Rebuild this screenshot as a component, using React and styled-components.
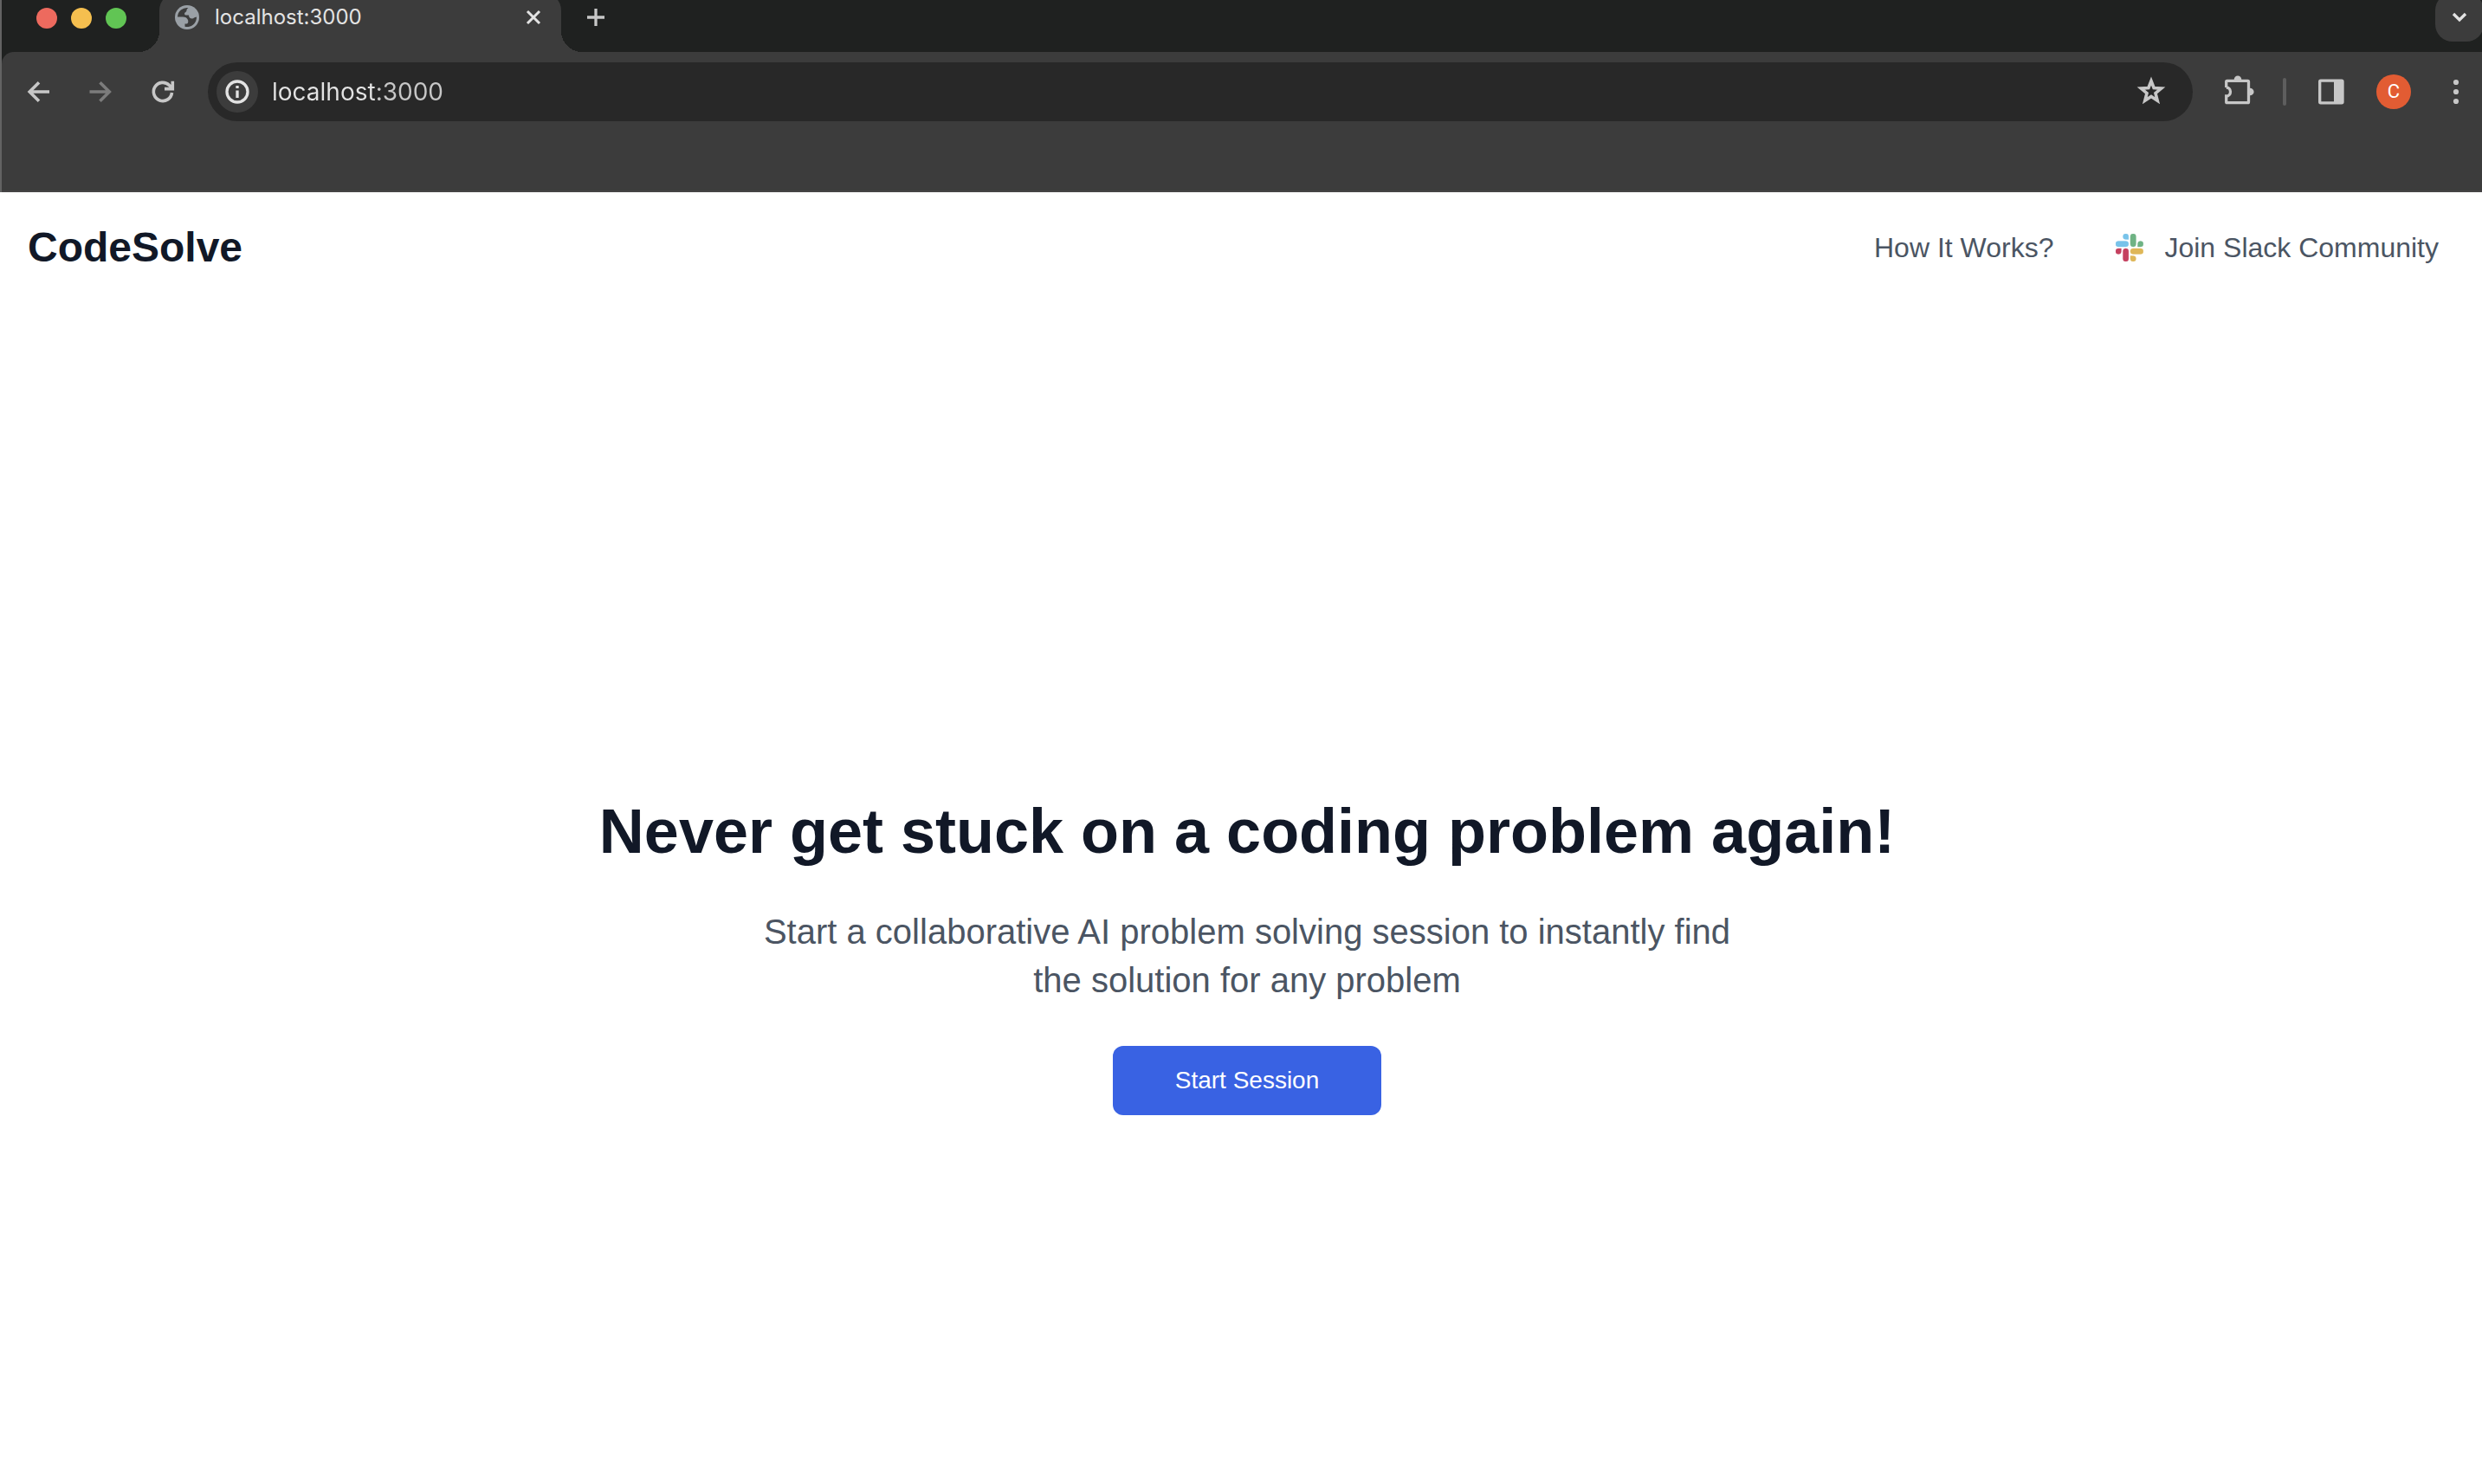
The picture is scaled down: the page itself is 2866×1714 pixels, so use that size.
import React from "react";
import styled, { createGlobalStyle } from "styled-components";

const GlobalStyle = createGlobalStyle`
  *, *::before, *::after { box-sizing: border-box; }
  body { margin: 0; background: #fff; overflow-x: hidden; }
  button, input { font: inherit; border: 0; padding: 0; background: none; }
  h1, p { margin: 0; }
`;

const chrome = "#3c3c3c";
const uiFont = `Inter, Roboto, sans-serif`;
const pageFont = `Helvetica, "Liberation Sans", Arial, sans-serif`;

const Window = styled.div`
  min-height: 100vh;
  display: flex;
  flex-direction: column;
`;

const BrowserFrame = styled.div`
  background: #1f2120;
  border-left: 2px solid #636363;
  font-family: ${uiFont};
`;

const TabStrip = styled.div`
  height: 60px;
  display: flex;
  overflow: hidden;
`;

const TrafficLights = styled.div`
  width: 182px;
  padding: 9px 0 0 40px;
  display: flex;
  gap: 16px;
`;

const Light = styled.button`
  width: 24px;
  height: 24px;
  border-radius: 50%;
  background: ${(p) => p.$color};
`;

const Tab = styled.div`
  position: relative;
  width: 464px;
  height: 68px;
  margin-top: -8px;
  padding: 0 20px 12px 18px;
  display: flex;
  align-items: center;
  background: ${chrome};
  border-radius: 20px 20px 0 0;

  &::before,
  &::after {
    content: "";
    position: absolute;
    bottom: 0;
    width: 24px;
    height: 24px;
  }
  &::before {
    right: 100%;
    background: radial-gradient(circle at 0 0, transparent 24px, ${chrome} 24px);
  }
  &::after {
    left: 100%;
    background: radial-gradient(circle at 100% 0, transparent 24px, ${chrome} 24px);
  }
`;

const TabTitle = styled.span`
  flex: 1;
  margin-left: 18px;
  font-size: 24px;
  line-height: 32px;
  color: #e3e3e3;
`;

const IconButton = styled.button`
  width: ${(p) => p.$size || 56}px;
  height: ${(p) => p.$size || 56}px;
  flex: none;
  display: flex;
  align-items: center;
  justify-content: center;
  border-radius: 20px;
  color: ${(p) => p.$color || "#c7c7c7"};
  background: ${(p) => p.$bg || "none"};
`;

const NewTab = styled(IconButton)`
  height: 40px;
  margin-left: 12px;
`;

const TabSearch = styled(IconButton)`
  margin: -8px -2px 0 auto;
`;

const Toolbar = styled.div`
  height: 162px;
  padding: 12px 2px 0 14px;
  display: flex;
  align-items: flex-start;
  background: ${chrome};
  border-bottom: 2px solid #464445;
  border-top-left-radius: 14px;
`;

const ToolGroup = styled.div`
  height: 68px;
  display: flex;
  align-items: center;
  gap: ${(p) => p.$gap}px;
`;

const AddressBar = styled.div`
  flex: 1;
  height: 68px;
  margin: 0 24px;
  padding: 0 20px 0 10px;
  display: flex;
  align-items: center;
  background: #282828;
  border-radius: 34px;
`;

const SiteInfo = styled(IconButton)`
  border-radius: 50%;
`;

const AddressInput = styled.input`
  flex: 1;
  min-width: 0;
  height: 40px;
  margin-left: 16px;
  font-size: 28px;
  line-height: 40px;
  color: transparent;
  background: linear-gradient(90deg, #e3e3e3 120px, #c7c7c7 120px);
  background-clip: text;
  -webkit-background-clip: text;
  outline: none;
`;

const Divider = styled.span`
  width: 4px;
  height: 32px;
  border-radius: 2px;
  background: #5e5e5e;
`;

const Avatar = styled.span`
  width: 40px;
  height: 40px;
  border-radius: 50%;
  background: #e25c33;
  color: #fff;
  font: 22px/40px Roboto, sans-serif;
  text-align: center;
`;

const Page = styled.div`
  flex: 1;
  display: flex;
  flex-direction: column;
  background: #fff;
  font-family: ${pageFont};
`;

const Header = styled.header`
  height: 128px;
  padding: 0 50px 0 32px;
  display: flex;
  align-items: center;
  justify-content: space-between;
`;

const Brand = styled.a`
  font-size: 48px;
  line-height: 56px;
  font-weight: 700;
  color: #111827;
  text-decoration: none;
`;

const Nav = styled.nav`
  display: flex;
  align-items: center;
  gap: 72px;
`;

const NavLink = styled.a`
  display: flex;
  align-items: center;
  gap: 24px;
  font-size: 32px;
  line-height: 40px;
  color: #4b5563;
  text-decoration: none;
`;

const Hero = styled.main`
  flex: 1;
  padding: 144px 0 0 14px;
  display: flex;
  flex-direction: column;
  align-items: center;
  justify-content: center;
  text-align: center;
`;

const Title = styled.h1`
  font-size: 72px;
  line-height: 80px;
  font-weight: 700;
  color: #111827;
`;

const Lead = styled.p`
  max-width: 1152px;
  margin: 48px 0;
  font-size: 40px;
  line-height: 56px;
  color: #4b5563;
`;

const StartButton = styled.button`
  height: 80px;
  padding: 0 72px;
  border-radius: 12px;
  background: #3962e3;
  color: #fff;
  font-size: 28px;
  line-height: 40px;
`;

const Icon = ({ size = 40, sw = 3.3, children }) => (
  <svg
    width={size}
    height={size}
    viewBox={`0 0 ${size} ${size}`}
    fill="none"
    stroke="currentColor"
    strokeWidth={sw}
    aria-hidden="true"
  >
    {children}
  </svg>
);

const Globe = () => (
  <svg width="28" height="28" viewBox="0 0 28 28" aria-hidden="true">
    <circle cx="14" cy="14" r="14" fill="#9aa0a6" />
    <path
      fill={chrome}
      d="M3 13.500A11 11 0 0 1 15.500 3C14 4 13.500 4.800 13.500 6C13.500 8 11 8 11 9.700C11 11 12 11.500 13.500 11.500H16C16 14 17.500 15.500 20 15.500C21.500 15.500 22.500 13.800 25 13.500A11 11 0 0 1 11.500 24.700V21.500H13.500C15.500 21.200 15.500 18.500 15 17C14 14.500 12 13.500 9 13.500Z"
    />
  </svg>
);

const SlackLogo = () => (
  <svg width="32" height="32" viewBox="0 0 54 54" aria-hidden="true">
    <g strokeWidth="0.600">
      <path fill="#78c3ea" stroke="#78c3ea" d="M19.700.1a5.400 5.400 0 0 0-5.400 5.400 5.400 5.400 0 0 0 5.400 5.400h5.400V5.500A5.400 5.400 0 0 0 19.700.1m0 14.400H5.400A5.400 5.400 0 0 0 0 19.900a5.400 5.400 0 0 0 5.400 5.400h14.300a5.400 5.400 0 0 0 5.400-5.400 5.400 5.400 0 0 0-5.400-5.400" />
      <path fill="#6fb384" stroke="#6fb384" d="M53.800 19.900a5.400 5.400 0 0 0-5.400-5.400 5.400 5.400 0 0 0-5.400 5.400v5.400h5.400a5.400 5.400 0 0 0 5.400-5.400m-14.300 0V5.500A5.400 5.400 0 0 0 34.100.1a5.400 5.400 0 0 0-5.400 5.400v14.400a5.400 5.400 0 0 0 5.400 5.400 5.400 5.400 0 0 0 5.400-5.400" />
      <path fill="#dfb758" stroke="#dfb758" d="M34.100 54a5.400 5.400 0 0 0 5.400-5.400 5.400 5.400 0 0 0-5.400-5.400h-5.400v5.400a5.400 5.400 0 0 0 5.400 5.400m0-14.400h14.300a5.400 5.400 0 0 0 5.400-5.400 5.400 5.400 0 0 0-5.400-5.400H34.100a5.400 5.400 0 0 0-5.400 5.400 5.400 5.400 0 0 0 5.400 5.400" />
      <path fill="#c5405f" stroke="#c5405f" d="M0 34.200a5.400 5.400 0 0 0 5.400 5.400 5.400 5.400 0 0 0 5.400-5.400v-5.400H5.400A5.400 5.400 0 0 0 0 34.200m14.300 0v14.400a5.400 5.400 0 0 0 5.400 5.400 5.400 5.400 0 0 0 5.400-5.400V34.200a5.400 5.400 0 0 0-5.400-5.400 5.400 5.400 0 0 0-5.400 5.400" />
    </g>
  </svg>
);

export default function App() {
  return (
    <>
      <GlobalStyle />
      <Window>
        <BrowserFrame>
          <TabStrip>
            <TrafficLights>
              <Light $color="#ed6a5e" aria-label="Close window" />
              <Light $color="#f5bf4f" aria-label="Minimize window" />
              <Light $color="#61c554" aria-label="Zoom window" />
            </TrafficLights>
            <Tab>
              <Globe />
              <TabTitle>localhost:3000</TabTitle>
              <IconButton $size={24} $color="#e3e3e3" aria-label="Close tab">
                <Icon size={24} sw={3}>
                  <path d="M5 5L19 19M19 5L5 19" />
                </Icon>
              </IconButton>
            </Tab>
            <NewTab aria-label="New tab">
              <Icon size={24} sw={3.3}>
                <path d="M12 2V22M2 12H22" />
              </Icon>
            </NewTab>
            <TabSearch $bg={chrome} $color="#e3e3e3" aria-label="Search tabs">
              <Icon size={24} sw={3.3}>
                <path d="M5 8L12 15L19 8" />
              </Icon>
            </TabSearch>
          </TabStrip>
          <Toolbar>
            <ToolGroup $gap={16}>
              <IconButton aria-label="Back">
                <Icon sw={3.6}>
                  <path d="M33 20H10M21 9.200L10.200 20L21 30.800" />
                </Icon>
              </IconButton>
              <IconButton $color="#7c7c7c" aria-label="Forward">
                <Icon sw={3.6}>
                  <path d="M7.500 20H30M19.500 9.200L30.300 20L19.500 30.800" />
                </Icon>
              </IconButton>
              <IconButton aria-label="Reload">
                <Icon sw={3.6}>
                  <path d="M30.500 21A10.600 10.600 0 1 1 27.500 12.500L31 16M31.300 7.700V16.600H22" />
                </Icon>
              </IconButton>
            </ToolGroup>
            <AddressBar>
              <SiteInfo $size={48} $bg={chrome} $color="#e3e3e3" aria-label="View site information">
                <Icon size={28} sw={3.3}>
                  <circle cx="14" cy="14" r="12" />
                  <path d="M14 12.500V21M14 7V10" />
                </Icon>
              </SiteInfo>
              <AddressInput aria-label="Address" defaultValue="localhost:3000" />
              <IconButton aria-label="Bookmark this tab">
                <Icon sw={3.6}>
                  <path d="M20 7.500L23.100 15.500L31.700 16.100L25 21.600L27.200 30.200L20 25.500L12.800 30.200L15 21.600L8.300 16.100L16.900 15.500Z" />
                </Icon>
              </IconButton>
            </AddressBar>
            <ToolGroup $gap={24}>
              <IconButton aria-label="Extensions">
                <Icon>
                  <path d="M6.700 15V8.300a1 1 0 0 1 1-1H31.500a1 1 0 0 1 1 1V31.700a1 1 0 0 1-1 1H7.700a1 1 0 0 1-1-1V25A4.800 5 0 0 0 6.700 15" />
                  <path d="M15.700 6a4.300 4.600 0 0 1 8.600 0zM34 15.700a4.600 4.300 0 0 1 0 8.600z" fill="currentColor" stroke="none" />
                </Icon>
              </IconButton>
              <Divider />
              <ToolGroup $gap={16}>
                <IconButton aria-label="Side panel">
                  <Icon>
                    <rect x="6.700" y="7.200" width="26.300" height="25.600" rx="1" />
                    <path d="M23 7H33V33H23Z" fill="currentColor" stroke="none" />
                  </Icon>
                </IconButton>
                <IconButton aria-label="Profile">
                  <Avatar>C</Avatar>
                </IconButton>
                <IconButton aria-label="Menu">
                  <Icon>
                    <g fill="currentColor" stroke="none">
                      <circle cx="20" cy="9" r="3.100" />
                      <circle cx="20" cy="20" r="3.100" />
                      <circle cx="20" cy="31" r="3.100" />
                    </g>
                  </Icon>
                </IconButton>
              </ToolGroup>
            </ToolGroup>
          </Toolbar>
        </BrowserFrame>
        <Page>
          <Header>
            <Brand href="#">CodeSolve</Brand>
            <Nav>
              <NavLink href="#how">How It Works?</NavLink>
              <NavLink href="#slack">
                <SlackLogo />
                Join Slack Community
              </NavLink>
            </Nav>
          </Header>
          <Hero>
            <Title>Never get stuck on a coding problem again!</Title>
            <Lead>
              Start a collaborative AI problem solving session to instantly find the solution for any problem
            </Lead>
            <StartButton>Start Session</StartButton>
          </Hero>
        </Page>
      </Window>
    </>
  );
}
